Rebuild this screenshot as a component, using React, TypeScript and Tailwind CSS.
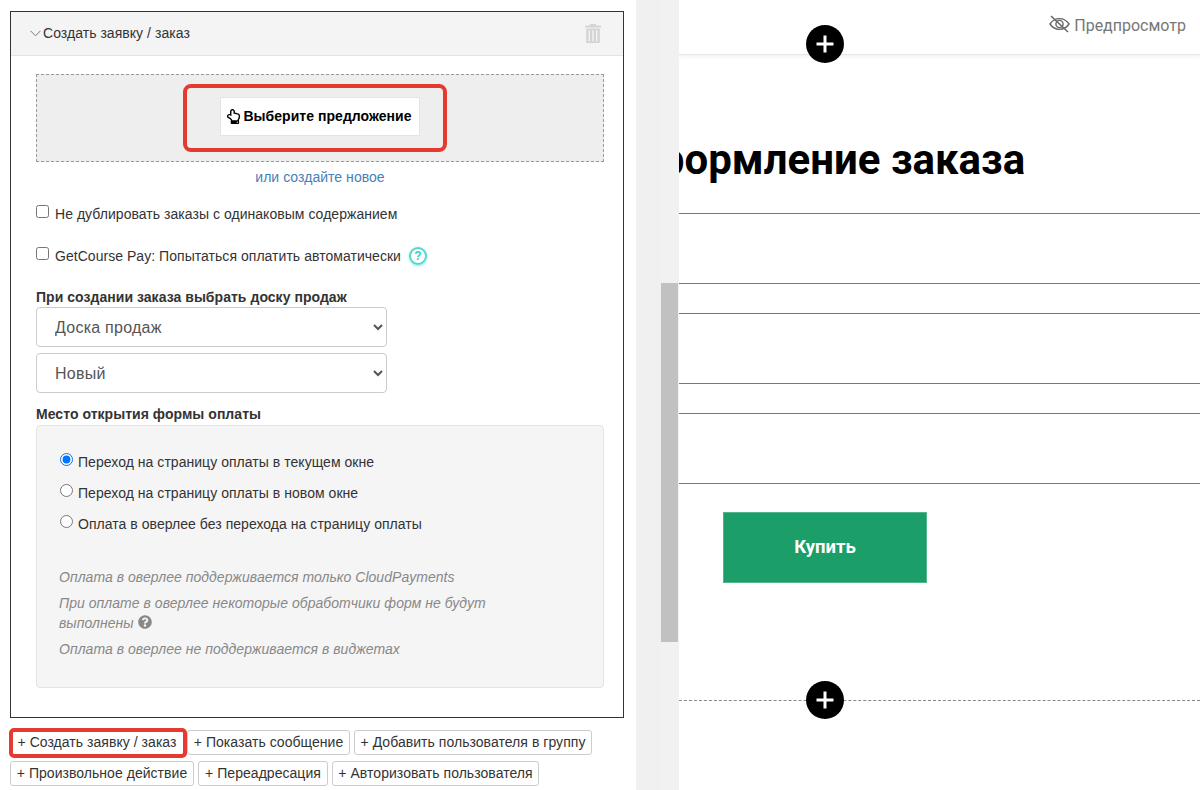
import { FaRegHandPointUp, FaQuestionCircle } from "react-icons/fa";

const Divider = ({ mt }: { mt: string }) => <div className={`h-px bg-[#777] ${mt}`} />;

function PlusCircle() {
  return (
    <div className="w-[38px] h-[38px] rounded-full bg-black flex items-center justify-center">
      <svg width="22" height="22" viewBox="0 0 22 22">
        <path d="M11 2.5v17M2.5 11h17" stroke="#fff" strokeWidth="3" />
      </svg>
    </div>
  );
}

function Trash() {
  return (
    <svg width="16" height="19" viewBox="0 0 16 19" fill="#d4d4d4">
      <path d="M5.5 0h5l.8 1.6H16v1.8H0V1.6h4.7z" />
      <path fillRule="evenodd" d="M1.2 4.4h13.6V19H1.2zM3.6 6.2v11h1.4v-11zM7.3 6.2v11h1.4v-11zM11 6.2v11h1.4v-11z" />
    </svg>
  );
}

function EyeOff() {
  return (
    <svg width="21" height="18" viewBox="0 0 21 18" fill="none" stroke="#666" strokeWidth="1.4">
      <path d="M1 9c2.4-3.6 5.6-5.4 9.5-5.4S17.600 5.400 20 9c-2.400 3.600-5.600 5.400-9.500 5.400S3.400 12.600 1 9z" />
      <circle cx="10.500" cy="9" r="3.600" />
      <path d="M2 1l17 16" strokeWidth="1.500" />
    </svg>
  );
}

const ActionBtn = ({ label, w }: { label: string; w: string }) => (
  <button className={`${w} h-[25px] border border-[#ccc] rounded-[3px] bg-white text-[14px] text-[#333] text-center whitespace-nowrap`}>
    {label}
  </button>
);

export default function App() {
  return (
    <div className="relative w-[1200px] h-[790px] overflow-hidden flex bg-white font-['Liberation_Sans',Arial,sans-serif] text-[#333]">
      {/* Left column */}
      <div className="w-[636px] shrink-0 pl-[10px] pt-[11px] tracking-[0.04px]">
        <div className="w-[614px] h-[707px] border border-[#333]">
          <div className="h-[44px] bg-[#f4f4f4] border-b border-[#e4e4e4] flex items-center justify-between pl-[19px] pr-[22px]">
            <div className="flex items-center gap-[2px] text-[14px]">
              <svg width="11" height="7" viewBox="0 0 11 7" fill="none" stroke="#777" strokeWidth="1"><path d="M.5.8l5 5 5-5" /></svg>
              <span>Создать заявку / заказ</span>
            </div>
            <Trash />
          </div>
          <div className="pl-[25px] pr-[19px]">
            <div className="mt-[18px] h-[88px] border border-dashed border-[#999] bg-[#eee] flex items-center justify-center">
              <button className="w-[200px] h-[39px] bg-white border border-[#e4e4e4] flex items-center justify-center gap-[2px] text-[14px] font-bold text-black -mt-[3px]">
                <FaRegHandPointUp size={15} className="-ml-[2px]" />
                <span>Выберите предложение</span>
              </button>
            </div>
            <div className="mt-[5px] text-center text-[14px] leading-5 text-[#4680b8]">или создайте новое</div>

            <label className="mt-[17px] flex items-center h-5 text-[14px]">
              <input type="checkbox" className="w-[13px] h-[13px] m-0 -mt-[6px] mr-[6px]" />
              Не дублировать заказы с одинаковым содержанием
            </label>
            <label className="mt-[22px] flex items-center h-5 text-[14px]">
              <input type="checkbox" className="w-[13px] h-[13px] m-0 -mt-[6px] mr-[6px]" />
              GetCourse Pay: Попытаться оплатить автоматически
              <span className="ml-[8px] w-[18px] h-[18px] rounded-full border-2 border-[#4fd8cb] text-[#35cfc0] font-bold text-[12px] flex items-center justify-center shadow-[0_1px_3px_rgba(79,216,203,0.6)]">?</span>
            </label>

            <div className="mt-[21px] h-5 leading-5 text-[14px] font-bold">При создании заказа выбрать доску продаж</div>
            <select className="block w-[351px] h-[40px] border border-[#ccc] rounded-[4px] bg-white pl-[14px] text-[16px] tracking-[0.25px] text-[#555]">
              <option>Доска продаж</option>
            </select>
            <select className="block mt-[6px] w-[351px] h-[40px] border border-[#ccc] rounded-[4px] bg-white pl-[14px] text-[16px] tracking-[0.25px] text-[#555]">
              <option>Новый</option>
            </select>

            <div className="mt-[11px] h-5 leading-5 text-[14px] font-bold">Место открытия формы оплаты</div>
            <div className="mt-[1px] w-[568px] h-[263px] bg-[#f5f5f5] border border-[#e3e3e3] rounded-[4px] pl-[23px] pt-[26px] text-[14px]">
              <label className="flex items-center h-[20px]">
                <input type="radio" name="pay" defaultChecked className="w-[13px] h-[13px] m-0 -mt-[6px] mr-[5px]" />
                Переход на страницу оплаты в текущем окне
              </label>
              <label className="flex items-center h-[20px] mt-[11px]">
                <input type="radio" name="pay" className="w-[13px] h-[13px] m-0 -mt-[6px] mr-[5px]" />
                Переход на страницу оплаты в новом окне
              </label>
              <label className="flex items-center h-[20px] mt-[11px]">
                <input type="radio" name="pay" className="w-[13px] h-[13px] m-0 -mt-[6px] mr-[5px]" />
                Оплата в оверлее без перехода на страницу оплаты
              </label>
              <div className="mt-[33px] -ml-[1px] italic text-[#888] leading-5">
                <p>Оплата в оверлее поддерживается только CloudPayments</p>
                <p className="mt-[6px] w-[470px]">
                  При оплате в оверлее некоторые обработчики форм не будут выполнены{" "}
                  <FaQuestionCircle size={14} className="inline align-[-1px] text-[#888] ml-[1px]" />
                </p>
                <p className="mt-[6px]">Оплата в оверлее не поддерживается в виджетах</p>
              </div>
            </div>
          </div>
        </div>
        <div className="mt-[12px] flex gap-[3px]">
          <ActionBtn label="+ Создать заявку / заказ" w="w-[174px]" />
          <ActionBtn label="+ Показать сообщение" w="w-[163px]" />
          <ActionBtn label="+ Добавить пользователя в группу" w="ml-[1px] w-[238px]" />
        </div>
        <div className="mt-[6px] flex gap-[4px]">
          <ActionBtn label="+ Произвольное действие" w="w-[184px]" />
          <ActionBtn label="+ Переадресация" w="w-[130px]" />
          <ActionBtn label="+ Авторизовать пользователя" w="w-[207px]" />
        </div>
      </div>

      {/* Scroll strip */}
      <div className="w-[43px] shrink-0 bg-[#f0f0f0] flex justify-end">
        <div className="w-[18px] h-full bg-[#f1f1f1] pt-[283px] pr-px">
          <div className="h-[359px] bg-[#c1c1c1]" />
        </div>
      </div>

      {/* Right canvas */}
      <div className="flex-1 min-w-0 overflow-hidden font-['Roboto',sans-serif]">
        <div className="h-[55px] bg-white border-b border-[#e6e6e6] shadow-[0_2px_4px_rgba(0,0,0,0.06)] flex items-start justify-end pt-[15px] pr-[14px] gap-[4px] text-[16px] text-[#777]">
          <EyeOff />
          <span className="leading-[20px] mt-px">Предпросмотр</span>
        </div>
        <div className="ml-[-229px] w-[750px] text-center mt-[79px] h-[52px] leading-[52px] text-[42px] font-bold text-black whitespace-nowrap">
          Оформление заказа
        </div>
        <Divider mt="mt-[27px]" />
        <Divider mt="mt-[69px]" />
        <Divider mt="mt-[29px]" />
        <Divider mt="mt-[69px]" />
        <Divider mt="mt-[29px]" />
        <Divider mt="mt-[69px]" />
        <button className="block mt-[28px] ml-[44px] w-[204px] h-[71px] bg-[#1b9e68] border border-[#52b48c] text-white text-[18.5px] font-bold pt-[1px]">Купить</button>
        <div className="mt-[117px] border-t border-dashed border-[#888]" />
      </div>

      {/* Overlays */}
      <div className="absolute left-[183px] top-[84px] w-[264px] h-[68px] border-[4px] border-[#e53a30] rounded-[8px]" />
      <div className="absolute left-[9px] top-[728px] w-[178px] h-[30px] border-[4px] border-[#e53a30] rounded-[5px]" />
      <div className="absolute left-[806px] top-[25px]"><PlusCircle /></div>
      <div className="absolute left-[806px] top-[681px]"><PlusCircle /></div>
    </div>
  );
}
